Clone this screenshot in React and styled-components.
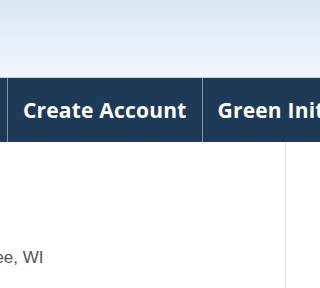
import styled, { createGlobalStyle } from "styled-components";

const GlobalStyle = createGlobalStyle`
  html, body {
    margin: 0;
    padding: 0;
    background: #fff;
    overflow: hidden;
  }
`;

const Page = styled.div`
  width: 100%;
  height: 288px;
  overflow: hidden;
  font-family: "Liberation Sans", Arial, sans-serif;
`;

const Header = styled.header`
  height: 77px;
  background: linear-gradient(to bottom, #dbe7f4 0%, #f1f6fc 100%);
  border-bottom: 1px solid #c9d1da;
`;

const Nav = styled.nav`
  display: flex;
  height: 64px;
  background: #1d3a56;
  margin-left: ${(p) => p.$shift}px;
`;

const NavItem = styled.a`
  display: flex;
  align-items: center;
  flex-shrink: 0;
  padding: 0 15px;
  border-left: 1px solid #8593a3;
  color: #fff;
  font-family: "Open Sans", "Noto Sans", sans-serif;
  font-weight: 700;
  font-size: 21px;
  letter-spacing: 0.2px;
  text-decoration: none;
  white-space: nowrap;

  &:first-child {
    border-left: none;
  }
`;

const Main = styled.main`
  display: flex;
  height: 146px;
`;

const Content = styled.section`
  width: 285px;
  flex-shrink: 0;
  padding-top: 97px;
  color: #555;
  font-size: 17px;
  overflow: hidden;
`;

const Line = styled.p`
  margin: 0 0 0 ${(p) => p.$shift}px;
  line-height: 37px;
  white-space: nowrap;
`;

const Sidebar = styled.aside`
  flex: 1;
  border-left: 1px solid #e4e4e4;
`;

export default function App() {
  return (
    <Page>
      <GlobalStyle />
      <Header />
      <Nav $shift={-86}>
        <NavItem href="#">Home</NavItem>
        <NavItem href="#">Create Account</NavItem>
        <NavItem href="#">Green Initiatives</NavItem>
      </Nav>
      <Main>
        <Content>
          <Line $shift={-67}>Milwaukee, WI</Line>
          <Line $shift={-67}>Founded in 1998</Line>
        </Content>
        <Sidebar />
      </Main>
    </Page>
  );
}
